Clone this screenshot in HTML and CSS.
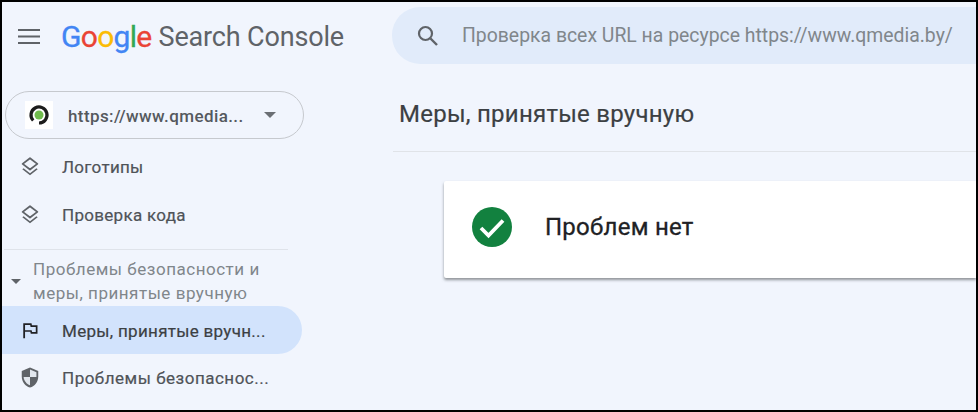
FILE: index.html
```html
<!DOCTYPE html>
<html lang="ru">
<head>
<meta charset="utf-8">
<title>Google Search Console</title>
<link rel="stylesheet" href="styles.css">
</head>
<body>
<div class="frame">
  <aside class="sidebar">
    <div class="brand">
      <svg class="menu-icon" viewBox="0 0 22 15"><path d="M0 1h22M0 7.500h22M0 14h22"/></svg>
      <span class="logo"><span class="g-blue">G</span><span class="g-red">o</span><span class="g-yellow">o</span><span class="g-blue">g</span><span class="g-green">l</span><span class="g-red">e</span></span>
      <span class="product">Search Console</span>
    </div>
    <div class="property">
      <span class="favicon">
        <svg viewBox="0 0 28 28" width="28" height="28"><path d="M8.200 19.500A8 8 0 1 1 14 22" fill="none" stroke="#1c1c1c" stroke-width="3.200"/><circle cx="14" cy="14" r="4.500" fill="#6fbb4c"/></svg>
      </span>
      <span class="property-url">https://www.qmedia...</span>
      <span class="caret"></span>
    </div>
    <nav class="nav">
      <div class="nav-item">
        <svg class="nav-icon" viewBox="0 0 24 24"><path d="M12 3.500 4 9.700l8 6.200 8-6.200z" fill="none" stroke="#5f6368" stroke-width="2" stroke-linejoin="round"/><path d="m5 14.400-1.400 1.100 8.400 6.500 8.400-6.500-1.400-1.100-7 5.400z" fill="#5f6368"/></svg>
        <span class="nav-label">Логотипы</span>
      </div>
      <div class="nav-item">
        <svg class="nav-icon" viewBox="0 0 24 24"><path d="M12 3.500 4 9.700l8 6.200 8-6.200z" fill="none" stroke="#5f6368" stroke-width="2" stroke-linejoin="round"/><path d="m5 14.400-1.400 1.100 8.400 6.500 8.400-6.500-1.400-1.100-7 5.400z" fill="#5f6368"/></svg>
        <span class="nav-label">Проверка кода</span>
      </div>
      <hr class="nav-divider">
      <div class="nav-section">
        <span class="section-caret"></span>
        <span class="section-label">Проблемы безопасности и<br>меры, принятые вручную</span>
      </div>
      <div class="nav-item active">
        <svg class="nav-icon flag" viewBox="0 0 24 24"><path d="M3 23V3h11l.6 2.600H22v11.400H13l-.6-2.600H5.400V23z M5.400 5.400v6.800h8.800l.6 2.600h4.900V8H12.800l-.6-2.600z" fill="#202124" fill-rule="evenodd"/></svg>
        <span class="nav-label">Меры, принятые вручн...</span>
      </div>
      <div class="nav-item">
        <svg class="nav-icon" viewBox="0 0 24 24"><path d="M12 1.500 3 5.500v6c0 5.600 3.800 10.800 9 12 5.200-1.200 9-6.400 9-12v-6z" fill="#5f6368"/><path d="M12 3.700v8.300H5c.4 4.100 3.300 7.800 7 9V12h7V6.800z" fill="#f1f5fd" fill-opacity=".9"/></svg>
        <span class="nav-label wide">Проблемы безопаснос...</span>
      </div>
    </nav>
  </aside>
  <main class="main">
    <div class="search">
      <svg class="search-icon" viewBox="0 0 24 24"><circle cx="9.500" cy="9.500" r="6.500" fill="none" stroke="#5f6368" stroke-width="2.200"/><path d="m14.500 14.500 6.500 6.500" stroke="#5f6368" stroke-width="2.400" fill="none"/></svg>
      <span class="search-text">Проверка всех URL на ресурсе https://www.qmedia.by/</span>
    </div>
    <h1 class="page-title">Меры, принятые вручную</h1>
    <div class="content">
      <section class="card">
        <svg class="check" viewBox="0 0 40 40"><circle cx="20" cy="20" r="20" fill="#12813f"/><path d="m9 21 7.500 7.500L31 13.500" fill="none" stroke="#fff" stroke-width="3.800"/></svg>
        <span class="card-text">Проблем нет</span>
      </section>
    </div>
  </main>
</div>
</body>
</html>
```
FILE: styles.css
```css
* { box-sizing: border-box; }
html, body { margin: 0; padding: 0; }
body { font-family: Roboto, "Liberation Sans", sans-serif; background: #000; }

.frame {
  width: 978px;
  height: 412px;
  border: 2px solid #000;
  background: #f1f5fd;
  overflow: hidden;
  display: grid;
  grid-template-columns: 390px 1fr;
}

/* Sidebar */
.sidebar { display: flex; flex-direction: column; min-width: 0; }
.brand {
  display: flex;
  align-items: center;
  height: 70px;
  padding-left: 16px;
}
.menu-icon { width: 22px; height: 15px; margin-right: 22px; flex: none; position: relative; top: -1px; }
.menu-icon path { stroke: #5f6368; stroke-width: 2; fill: none; }
.logo { font-size: 30px; font-weight: 400; letter-spacing: -0.7px; margin: 0 7px 0 -1px; line-height: 36px; -webkit-text-stroke: .3px; }
.g-blue { color: #4285f4; }
.g-red { color: #ea4335; }
.g-yellow { color: #fbbc05; }
.g-green { color: #34a853; }
.product { font-size: 27px; color: #5f6368; white-space: nowrap; letter-spacing: -0.17px; }

.property {
  width: 299px;
  height: 48px;
  margin: 19px 0 0 3px;
  border: 1px solid #c6c9ce;
  border-radius: 24px;
  display: flex;
  align-items: center;
  padding-left: 19px;
}
.favicon {
  width: 28px;
  height: 28px;
  background: #fff;
  flex: none;
  margin-right: 15px;
  display: flex;
}
.property-url { font-size: 17px; font-weight: 500; color: #55595e; white-space: nowrap; width: 196px; letter-spacing: .4px; padding-top: 1px; }
.caret {
  border-left: 6px solid transparent;
  border-right: 6px solid transparent;
  border-top: 6px solid #6b6f74;
}

.nav { display: flex; flex-direction: column; margin-top: 3px; width: 300px; }
.nav-item {
  height: 48px;
  display: flex;
  align-items: center;
  padding-left: 17px;
  border-radius: 0 24px 24px 0;
}
.nav-item.active { background: #d2e3fc; margin-top: 1px; margin-bottom: -1px; }
.nav-icon { width: 22px; height: 22px; margin-right: 21px; flex: none; }
.nav-icon.flag { width: 18px; height: 18px; margin: 0 23px 0 2px; }
.nav-label { font-size: 17px; font-weight: 400; color: #4f5358; white-space: nowrap; letter-spacing: .3px; padding-top: 1px; -webkit-text-stroke: .2px #4f5358; }
.nav-label.wide { letter-spacing: .5px; }
.active .nav-label { color: #3c4043; -webkit-text-stroke-color: #3c4043; }
.nav-divider {
  width: 284px;
  margin: 11px 0 7px 2px;
  border: 0;
  border-top: 1px solid #dfe3ea;
}
.nav-section {
  display: flex;
  align-items: center;
  height: 48px;
  padding-left: 9px;
}
.section-caret {
  border-left: 5px solid transparent;
  border-right: 5px solid transparent;
  border-top: 5px solid #5f6368;
  margin-right: 12px;
  margin-top: 1px;
}
.section-label { font-size: 17px; line-height: 24px; color: #80868b; white-space: nowrap; letter-spacing: .52px; }

/* Main */
.main { display: flex; flex-direction: column; min-width: 0; }
.search {
  height: 57px;
  margin-top: 5px;
  background: #e1ebfa;
  border-radius: 28px 0 0 28px;
  display: flex;
  align-items: center;
  padding-left: 24px;
}
.search-icon { width: 24px; height: 24px; margin-right: 22px; flex: none; }
.search-text { font-size: 19.400px; color: #80868b; white-space: nowrap; }
.page-title {
  margin: 0 0 0 1px;
  height: 88px;
  padding: 35px 0 0 6px;
  border-bottom: 1px solid #e0e3e8;
  font-size: 24px;
  line-height: 30px;
  font-weight: 400;
  color: #3c4043;
  white-space: nowrap;
  letter-spacing: .25px;
  -webkit-text-stroke: .2px #3c4043;
}
.content { padding: 29px 0 0 52px; }
.card {
  height: 97px;
  background: #fff;
  border-radius: 2px 0 0 2px;
  box-shadow: 0 2px 3px rgba(60, 64, 67, .55);
  display: flex;
  align-items: center;
  padding: 0 0 5px 28px;
}
.check { width: 40px; height: 40px; margin-right: 33px; flex: none; }
.card-text { font-size: 24px; font-weight: 400; color: #202124; letter-spacing: .25px; -webkit-text-stroke: .3px #202124; }
```
